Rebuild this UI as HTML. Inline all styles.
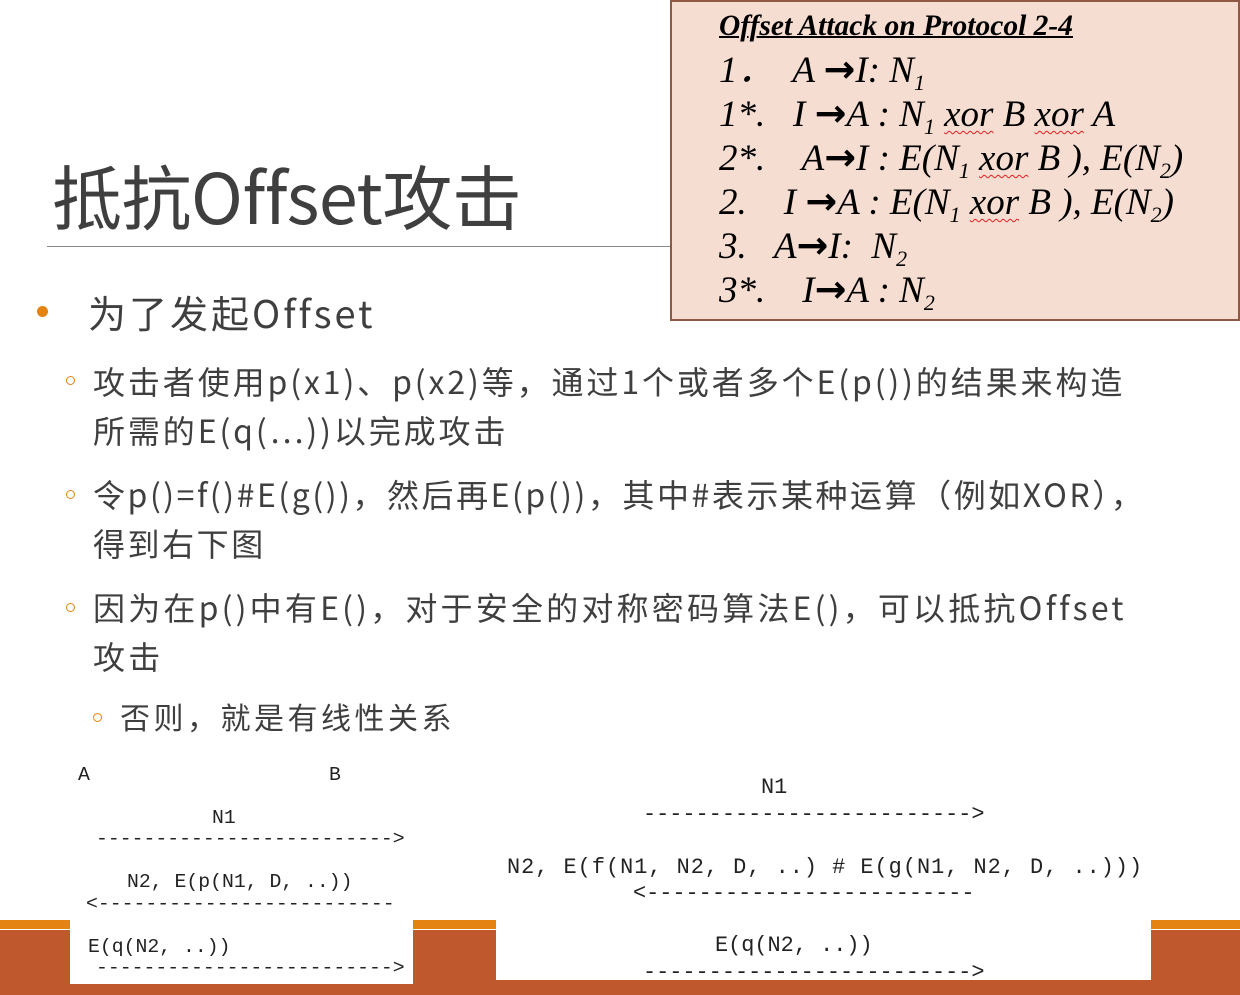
<!DOCTYPE html>
<html><head><meta charset="utf-8"><style>
*{margin:0;padding:0;box-sizing:border-box}
body{width:1240px;height:995px;position:relative;overflow:hidden;background:#fff;font-family:"Liberation Sans","Noto Sans CJK SC",sans-serif;color:#404040}
.a{position:absolute;white-space:pre}
.cj{font-family:"Noto Sans CJK SC","Liberation Sans",sans-serif;color:#3f3f3f}
.box{position:absolute;left:670px;top:0;width:570px;height:321px;background:#f6ddd1;border:2px solid #8e5a44}
.t{font-family:"Liberation Serif",serif;font-style:italic;font-size:37px;color:#000;position:absolute;left:47px;white-space:pre;line-height:1}
.t sub{font-size:22px;vertical-align:-8px;line-height:0}
.t b{font-style:normal;font-size:38px;font-family:"DejaVu Sans",sans-serif;line-height:0}
.w{text-decoration:underline wavy #e02020;text-decoration-thickness:1px;text-underline-offset:4px}
.m{font-family:"Liberation Mono",monospace;font-size:19.8px;color:#222;position:absolute;white-space:pre}
.r{font-size:21.9px}
.sb{position:absolute;width:9px;height:9px;border:1.5px solid #e48312;border-radius:50%}
</style></head><body>
<div class="a cj" style="left:52px;top:145px;font-size:70px;line-height:100px;letter-spacing:-0.5px">抵抗Offset攻击</div>
<div style="position:absolute;left:47px;top:246px;width:623px;height:1px;background:#888"></div>

<div class="box">
<div class="t" style="top:10px;font-weight:bold;font-size:29.5px;text-decoration:underline;text-decoration-thickness:2px">Offset Attack on Protocol 2-4</div>
<div class="t" style="top:50px">1．  A <b>→</b>I: N<sub>1</sub></div>
<div class="t" style="top:94px">1*.   I <b>→</b>A : N<sub>1</sub> <span class="w">xor</span> B <span class="w">xor</span> A</div>
<div class="t" style="top:138px">2*.    A<b>→</b>I : E(N<sub>1</sub> <span class="w">xor</span> B ), E(N<sub>2</sub>)</div>
<div class="t" style="top:182px">2.    I <b>→</b>A : E(N<sub>1</sub> <span class="w">xor</span> B ), E(N<sub>2</sub>)</div>
<div class="t" style="top:226px">3.   A<b>→</b>I:  N<sub>2</sub></div>
<div class="t" style="top:270px">3*.    I<b>→</b>A : N<sub>2</sub></div>
</div>

<div style="position:absolute;left:37px;top:306px;width:11px;height:11px;border-radius:50%;background:#e48312"></div>
<div class="a cj" style="left:88px;top:286px;font-size:38px;line-height:52px;letter-spacing:3px">为了发起Offset</div>

<div class="sb" style="left:66px;top:376px"></div>
<div class="a cj" style="left:93px;top:357px;font-size:32px;line-height:49px;letter-spacing:2.9px">攻击者使用p(x1)、p(x2)等，通过1个或者多个E(p())的结果来构造
所需的E(q(…))以完成攻击</div>
<div class="sb" style="left:66px;top:490px"></div>
<div class="a cj" style="left:93px;top:470px;font-size:32px;line-height:49px;letter-spacing:2.55px">令p()=f()#E(g())，然后再E(p())，其中#表示某种运算（例如XOR），
得到右下图</div>
<div class="sb" style="left:66px;top:603px"></div>
<div class="a cj" style="left:93px;top:583px;font-size:32px;line-height:49px;letter-spacing:3.2px">因为在p()中有E()，对于安全的对称密码算法E()，可以抵抗Offset
攻击</div>
<div class="sb" style="left:93px;top:713px"></div>
<div class="a cj" style="left:120px;top:694px;font-size:30px;line-height:44px;letter-spacing:3.5px">否则，就是有线性关系</div>

<div style="position:absolute;left:0;top:920px;width:1240px;height:9px;background:#e48312"></div>
<div style="position:absolute;left:0;top:930px;width:1240px;height:65px;background:#bf582c"></div>

<div style="position:absolute;left:70px;top:760px;width:343px;height:224px;background:#fff"></div>
<div class="m" style="left:78px;top:764px">A</div>
<div class="m" style="left:329px;top:764px">B</div>
<div class="m" style="left:212px;top:807px">N1</div>
<div class="m" style="left:96px;top:828px">-------------------------></div>
<div class="m" style="left:127px;top:871px">N2, E(p(N1, D, ..))</div>
<div class="m" style="left:86px;top:893px">&lt;-------------------------</div>
<div class="m" style="left:88px;top:936px">E(q(N2, ..))</div>
<div class="m" style="left:96px;top:957px">-------------------------></div>

<div style="position:absolute;left:496px;top:760px;width:655px;height:220px;background:#fff"></div>
<div class="m r" style="left:761px;top:775px">N1</div>
<div class="m r" style="left:643px;top:802px">-------------------------></div>
<div class="m r" style="left:507px;top:855px;letter-spacing:1px">N2, E(f(N1, N2, D, ..) # E(g(N1, N2, D, ..)))</div>
<div class="m r" style="left:633px;top:881px">&lt;-------------------------</div>
<div class="m r" style="left:715px;top:933px">E(q(N2, ..))</div>
<div class="m r" style="left:643px;top:960px">-------------------------></div>
</body></html>
